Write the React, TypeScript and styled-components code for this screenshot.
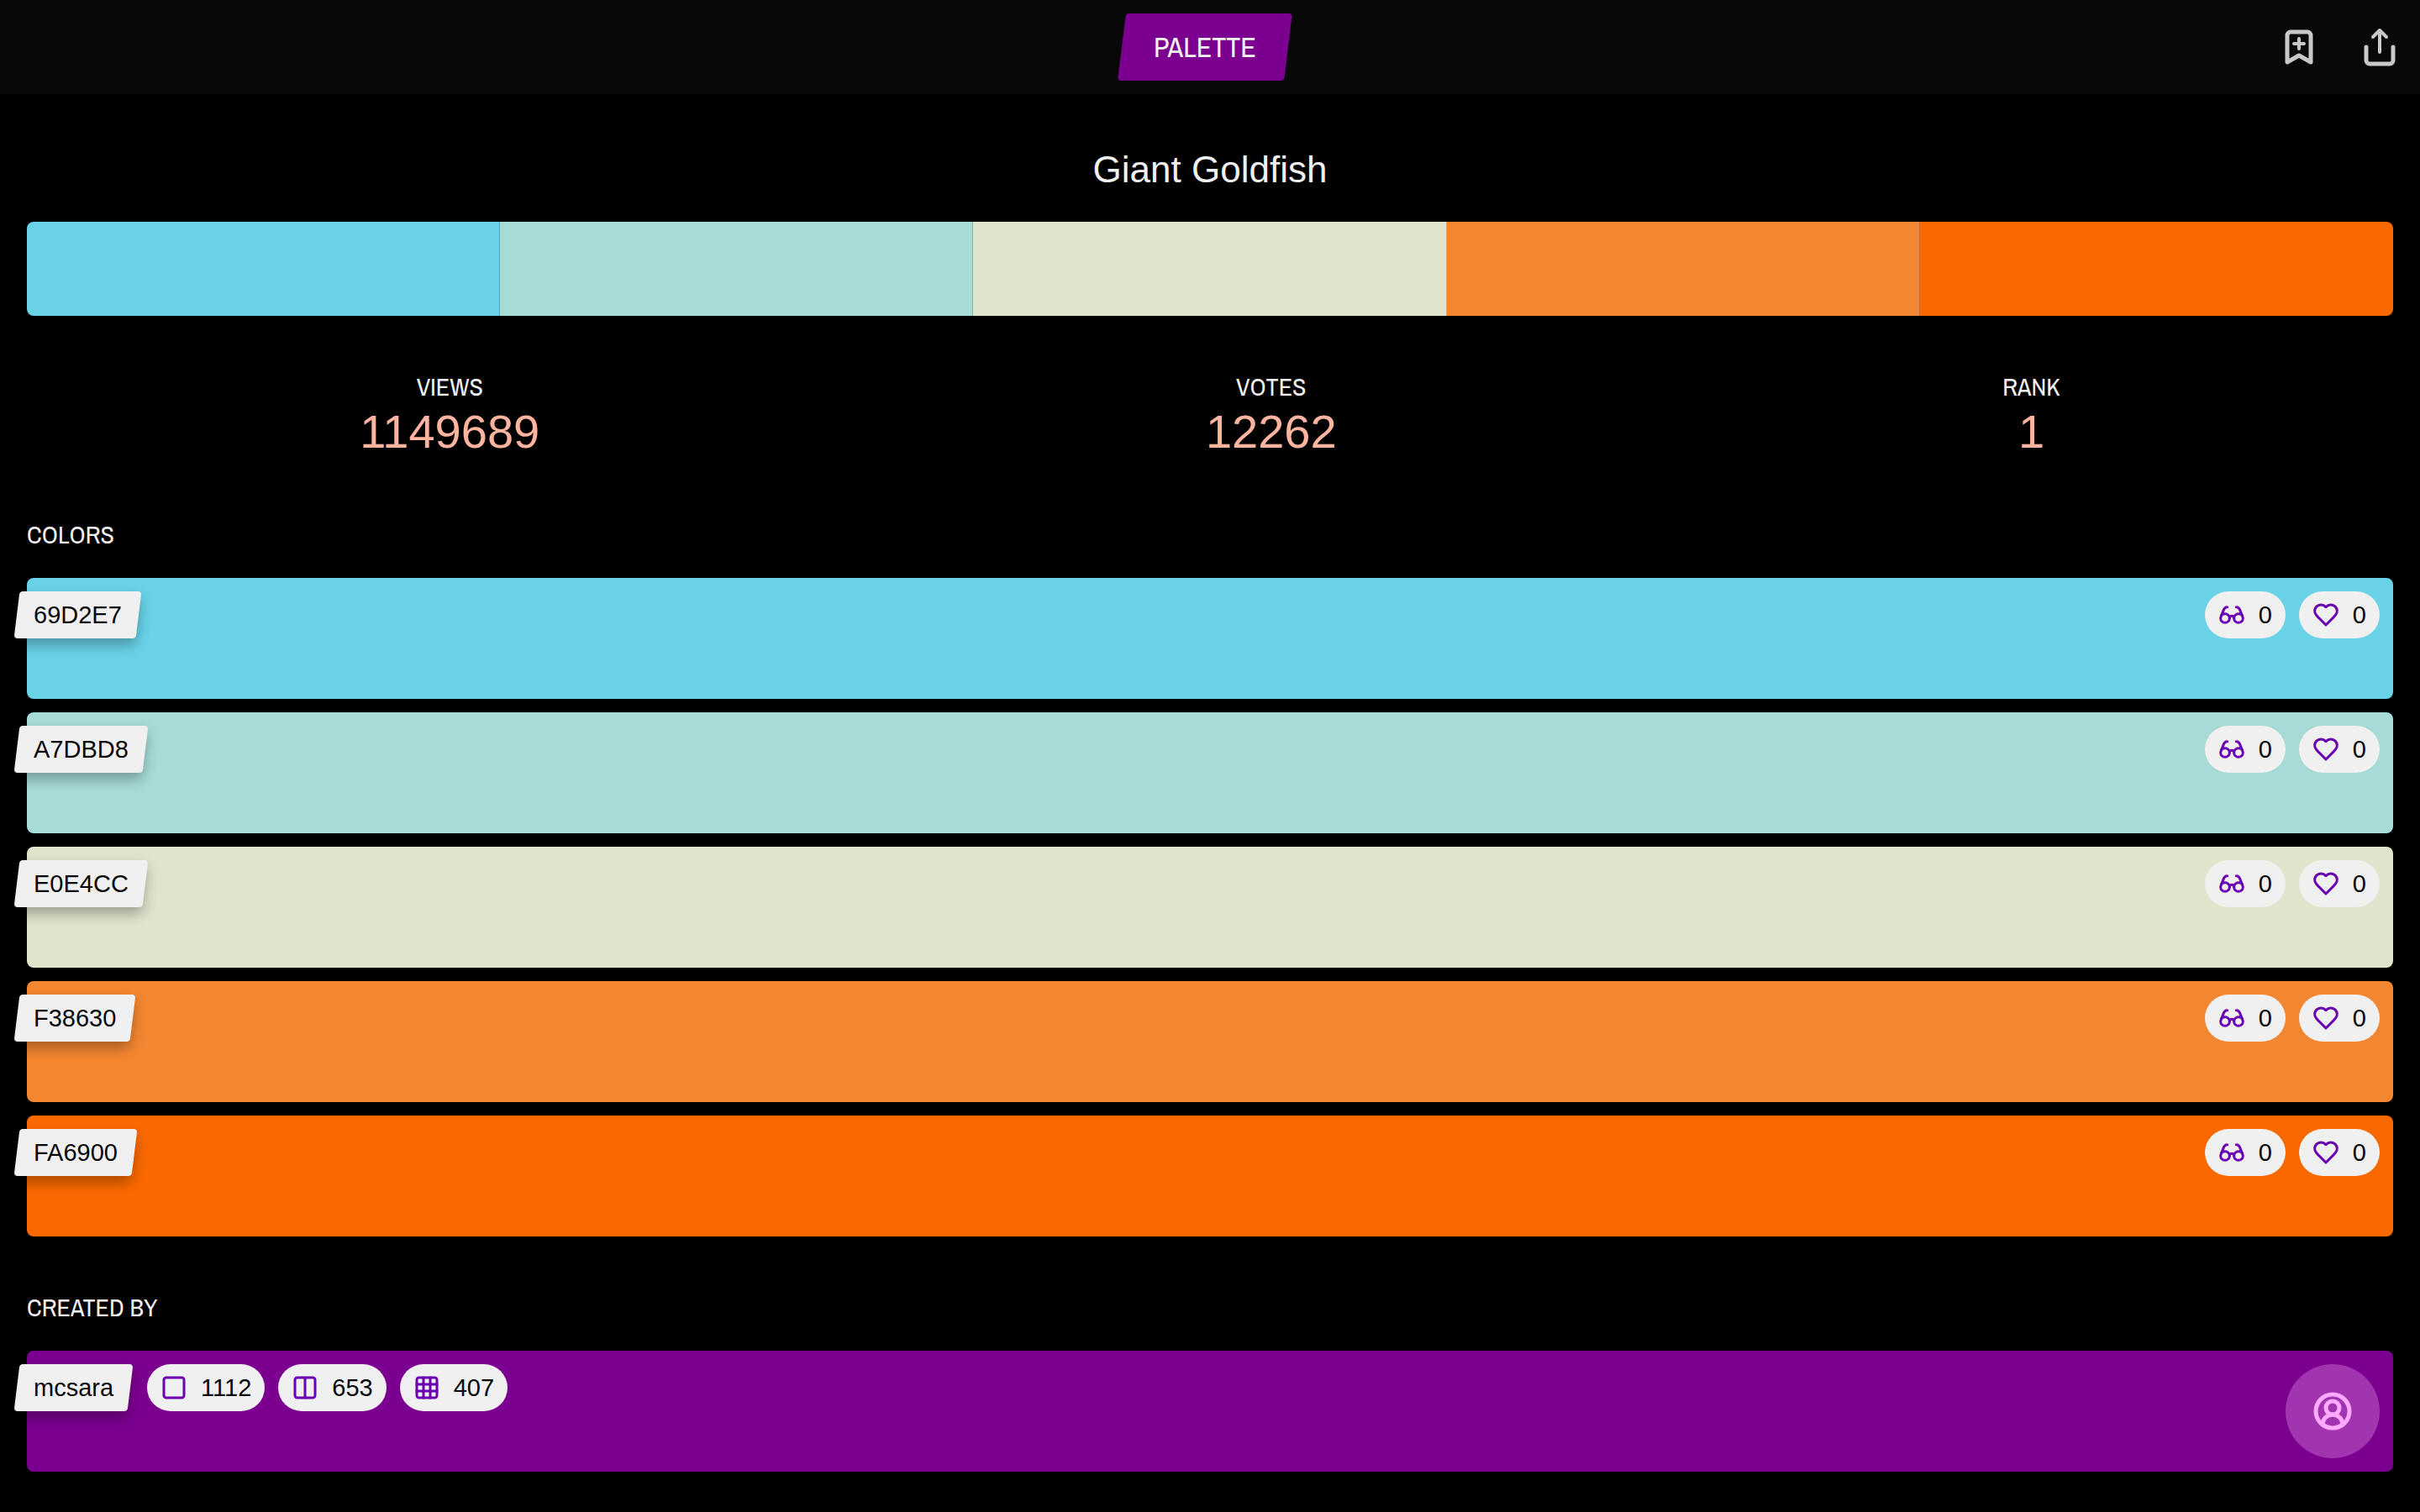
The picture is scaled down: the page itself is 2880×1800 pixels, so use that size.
import React from "react";
import styled, { createGlobalStyle } from "styled-components";

const sans = `"Liberation Sans", Arial, sans-serif`;
const narrow = `"Archivo Narrow", "Liberation Sans Narrow", "Liberation Sans", sans-serif`;

const GlobalStyle = createGlobalStyle`
  *, *::before, *::after { box-sizing: border-box; }
  body {
    margin: 0;
    background: #000;
    color: #f0f0f0;
    font-family: ${sans};
    font-size: 29px;
    line-height: 40px;
  }
  h1, h2, dl, dt, dd, ul { margin: 0; padding: 0; font-weight: 400; }
  button { border: 0; padding: 0; background: none; color: inherit; font: inherit; cursor: pointer; }
`;

const Header = styled.header`
  display: flex;
  align-items: center;
  justify-content: space-between;
  height: 112px;
  background: #080808;
`;

const HeaderStart = styled.div`
  width: 180px;
`;

const HeaderActions = styled.div`
  display: flex;
`;

const IconButton = styled.button`
  display: grid;
  place-items: center;
  width: 96px;
  height: 112px;
  color: #c8c8c8;
`;

const PaletteButton = styled.button`
  position: relative;
  z-index: 0;
  height: 80px;
  padding: 0 38px;
  color: #f0f0f0;
  font-family: ${narrow};
  font-size: 34px;

  &::before {
    content: "";
    position: absolute;
    inset: 0;
    z-index: -1;
    border-radius: 4px;
    background: #7b008f;
    transform: skewX(-7deg);
  }
`;

const Main = styled.main`
  padding: 64px 32px 48px;
`;

const Title = styled.h1`
  padding-bottom: 36px;
  font-size: 44px;
  line-height: 52px;
  text-align: center;
`;

const SwatchBar = styled.div`
  display: flex;
  height: 112px;
  overflow: hidden;
  border-radius: 8px;
`;

const Swatch = styled.div<{ $color: string }>`
  flex: 1;
  background: ${(p) => p.$color};

  &:not(:last-child) { box-shadow: inset -1px 0 rgba(0, 0, 0, 0.2); }
`;

const Stats = styled.dl`
  display: flex;
  justify-content: space-around;
  padding: 64px 0 68px;
  text-align: center;
`;

const StatLabel = styled.dt`
  font-family: ${narrow};
  font-size: 30px;
`;

const StatValue = styled.dd`
  color: #ffb4a0;
  font-size: 56px;
  line-height: 68px;
`;

const SectionTitle = styled.h2`
  padding-bottom: 32px;
  font-family: ${narrow};
  font-size: 30px;
`;

const List = styled.ul`
  display: grid;
  gap: 16px;
  padding-bottom: 64px;
  list-style: none;
`;

const Bar = styled.div<{ $color: string }>`
  display: flex;
  align-items: flex-start;
  justify-content: space-between;
  height: 144px;
  padding: 16px 16px 16px 0;
  border-radius: 8px;
  background: ${(p) => p.$color};
`;

const BarStart = styled.div`
  display: flex;
  gap: 20px;
  margin-left: -12px;
`;

const Pills = styled.div`
  display: flex;
  gap: 16px;
`;

const Tag = styled.button`
  position: relative;
  z-index: 0;
  height: 56px;
  padding: 0 20px;
  color: #080808;

  &::before {
    content: "";
    position: absolute;
    inset: 0;
    z-index: -1;
    border-radius: 4px;
    background: #f0f0f0;
    box-shadow: 0 8px 16px rgba(0, 0, 0, 0.3);
    transform: skewX(-7deg);
  }
`;

const Pill = styled.button`
  display: flex;
  align-items: center;
  gap: 16px;
  height: 56px;
  padding: 0 16px;
  border-radius: 28px;
  background: #f0f0f0;
  color: #080808;

  svg { color: #6a00b0; }
`;

const Avatar = styled.button`
  display: grid;
  place-items: center;
  width: 112px;
  height: 112px;
  border-radius: 50%;
  background: #a135b0;
  color: #ffaaff;
`;

const Svg = styled.svg`
  display: block;
  fill: none;
  stroke: currentColor;
  stroke-linecap: round;
  stroke-linejoin: round;
`;

const shapes = {
  bookmark: (
    <>
      <path d="m19 21-7-4-7 4V5a2 2 0 0 1 2-2h10a2 2 0 0 1 2 2v16z" />
      <path d="M12 7v6M15 10H9" strokeWidth="2" />
    </>
  ),
  share: (
    <>
      <path d="M4 12v8a2 2 0 0 0 2 2h12a2 2 0 0 0 2-2v-8" />
      <path d="M16 6l-4-4-4 4M12 2v13" strokeWidth="2" />
    </>
  ),
  glasses: (
    <>
      <circle cx="6" cy="15" r="4" />
      <circle cx="18" cy="15" r="4" />
      <path d="M14 15a2 2 0 0 0-2-2 2 2 0 0 0-2 2" />
      <path d="M2.5 13 5 7c.7-1.3 1.4-2 3-2M21.5 13 19 7c-.7-1.3-1.5-2-3-2" />
    </>
  ),
  heart: (
    <path d="M19 14c1.49-1.46 3-3.21 3-5.5A5.5 5.5 0 0 0 16.5 3c-1.76 0-3 .5-4.5 2-1.5-1.5-2.74-2-4.5-2A5.5 5.5 0 0 0 2 8.5c0 2.3 1.5 4.05 3 5.5l7 7Z" />
  ),
  square: <rect x="3" y="3" width="18" height="18" rx="2" />,
  columns: (
    <>
      <rect x="3" y="3" width="18" height="18" rx="2" />
      <path d="M12 3v18" />
    </>
  ),
  grid: (
    <>
      <rect x="3" y="3" width="18" height="18" rx="2" />
      <path d="M3 9h18M3 15h18M9 3v18M15 3v18" />
    </>
  ),
  user: (
    <>
      <path d="M18 20a6 6 0 0 0-12 0" />
      <circle cx="12" cy="10" r="4" />
      <circle cx="12" cy="12" r="10" />
    </>
  ),
};

type IconName = keyof typeof shapes;

function Icon({ name, size = 32, stroke = 2.25 }: { name: IconName; size?: number; stroke?: number }) {
  return (
    <Svg width={size} height={size} viewBox="0 0 24 24" strokeWidth={stroke} overflow="visible" aria-hidden="true">
      {shapes[name]}
    </Svg>
  );
}

function CountPill({ icon, label, count }: { icon: IconName; label: string; count: number }) {
  return (
    <Pill type="button" aria-label={`${label}: ${count}`}>
      <Icon name={icon} />
      <span>{count}</span>
    </Pill>
  );
}

const colors = ["69D2E7", "A7DBD8", "E0E4CC", "F38630", "FA6900"];

const stats = [
  { label: "VIEWS", value: 1149689 },
  { label: "VOTES", value: 12262 },
  { label: "RANK", value: 1 },
];

export default function App() {
  return (
    <>
      <GlobalStyle />
      <Header>
        <HeaderStart />
        <PaletteButton type="button">PALETTE</PaletteButton>
        <HeaderActions>
          <IconButton type="button" aria-label="Save">
            <Icon name="bookmark" size={48} stroke={2.5} />
          </IconButton>
          <IconButton type="button" aria-label="Share">
            <Icon name="share" size={48} stroke={2.5} />
          </IconButton>
        </HeaderActions>
      </Header>
      <Main>
        <Title>Giant Goldfish</Title>
        <SwatchBar>
          {colors.map((c) => (
            <Swatch key={c} $color={`#${c}`} />
          ))}
        </SwatchBar>
        <Stats>
          {stats.map((s) => (
            <div key={s.label}>
              <StatLabel>{s.label}</StatLabel>
              <StatValue>{s.value}</StatValue>
            </div>
          ))}
        </Stats>
        <SectionTitle>COLORS</SectionTitle>
        <List>
          {colors.map((c) => (
            <li key={c}>
              <Bar $color={`#${c}`}>
                <BarStart>
                  <Tag type="button">{c}</Tag>
                </BarStart>
                <Pills>
                  <CountPill icon="glasses" label="Views" count={0} />
                  <CountPill icon="heart" label="Likes" count={0} />
                </Pills>
              </Bar>
            </li>
          ))}
        </List>
        <SectionTitle>CREATED BY</SectionTitle>
        <Bar $color="#7b008f">
          <BarStart>
            <Tag type="button">mcsara</Tag>
            <Pills>
              <CountPill icon="square" label="Colors" count={1112} />
              <CountPill icon="columns" label="Palettes" count={653} />
              <CountPill icon="grid" label="Patterns" count={407} />
            </Pills>
          </BarStart>
          <Avatar type="button" aria-label="Profile">
            <Icon name="user" size={48} stroke={2.5} />
          </Avatar>
        </Bar>
      </Main>
    </>
  );
}
